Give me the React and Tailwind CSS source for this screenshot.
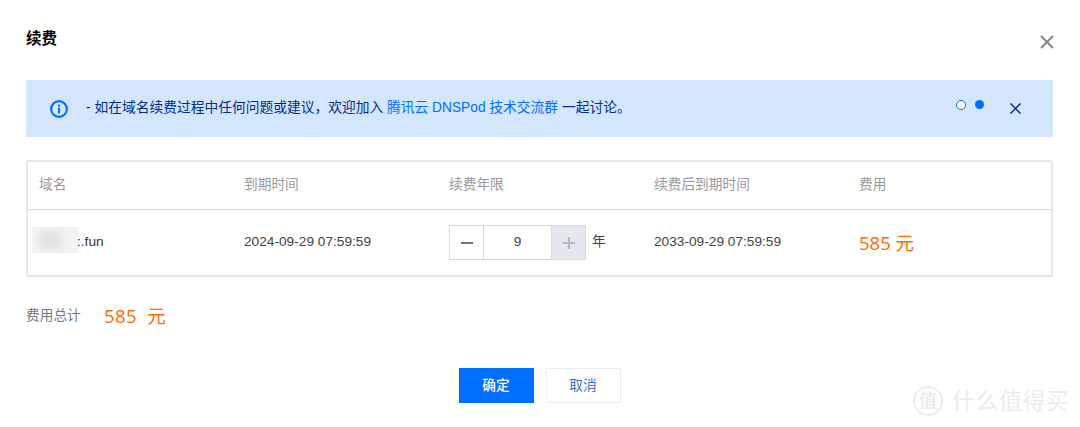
import React from "react";

const headers = ["域名", "到期时间", "续费年限", "续费后到期时间", "费用"];

const App = () => {
    return (
        <div className="relative w-[1080px] h-[427px] overflow-hidden bg-white font-['Liberation_Sans','Noto_Sans_CJK_SC',sans-serif] text-[13.7px] text-[#333]">
            <div className="px-[26px] pt-[29px]">
                {/* Title */}
                <div className="flex justify-between items-start h-[51px]">
                    <h2 className="text-[15.5px] leading-[20px] font-bold text-[#000]">续费</h2>
                    <svg className="w-[14px] h-[14px] mt-[6px]" viewBox="0 0 14 14" fill="none" stroke="#888" strokeWidth="2">
                        <path d="M1 1l12 12M13 1L1 13" />
                    </svg>
                </div>

                {/* Notice */}
                <div className="flex items-center h-[57px] w-[1027px] bg-[#d4e5fe] pl-[24px] pr-[32px] text-[#002c8c]">
                    <svg className="w-[18px] h-[18px] shrink-0" viewBox="0 0 18 18" fill="none">
                        <circle cx="9" cy="9" r="7.9" stroke="#006eff" strokeWidth="2.2" />
                        <rect x="8" y="4.6" width="2" height="2" fill="#006eff" />
                        <rect x="8" y="7.6" width="2" height="5.8" fill="#006eff" />
                    </svg>
                    <p className="ml-[18px] mb-[2px] text-[13.75px] leading-[18px] whitespace-nowrap">
                        - 如在域名续费过程中任何问题或建议，欢迎加入 <span className="text-[#006eff]">腾讯云 DNSPod 技术交流群</span> 一起讨论。
                    </p>
                    <div className="ml-auto flex items-center gap-[9px] mt-[-8px]">
                        <span className="w-[10px] h-[10px] rounded-full border border-[#006eff] bg-white"></span>
                        <span className="w-[9px] h-[9px] rounded-full bg-[#006eff]"></span>
                    </div>
                    <svg className="w-[11px] h-[11px] ml-[26px]" viewBox="0 0 11 11" fill="none" stroke="#002c8c" strokeWidth="1.5">
                        <path d="M0.5 0.5l10 10M10.5 0.5l-10 10" />
                    </svg>
                </div>

                {/* Table */}
                <div className="mt-[23px] w-[1027px] h-[117px] border-2 border-[#e4e7ee] rounded-[2px]">
                    <div className="grid grid-cols-[205px_205px_205px_205px_1fr] h-[48px] items-center border-b border-[#d5dae4] text-[#999] pl-[11px]">
                        {headers.map((h) => (
                            <div key={h}>{h}</div>
                        ))}
                    </div>
                    <div className="grid grid-cols-[205px_205px_205px_205px_1fr] h-[65px] items-center pl-[11px] text-[#444]">
                        <div className="relative pl-[38px] text-[#333]">
                            <span className="absolute left-[-7px] top-[-5px] w-[47px] h-[26px] bg-[#f3f3f3] overflow-hidden">
                                <span className="block ml-[6px] mt-[4px] w-[24px] h-[18px] rounded-full bg-[#dedede] blur-[4px]"></span>
                            </span>
                            <span className="relative">:.fun</span>
                        </div>
                        <div>2024-09-29 07:59:59</div>
                        <div className="flex items-center">
                            <div className="flex h-[35px] w-[137px] border border-[#d5dae4]">
                                <div className="w-[34px] flex items-center justify-center border-r border-[#d5dae4]">
                                    <span className="w-[12px] h-[2px] bg-[#777]"></span>
                                </div>
                                <div className="w-[67px] flex items-center justify-center text-[#444]">9</div>
                                <div className="flex-1 bg-[#e4e7ee] border-l border-[#d5dae4] flex items-center justify-center">
                                    <svg className="w-[12px] h-[12px]" viewBox="0 0 12 12" fill="#b4b8c0">
                                        <rect x="0" y="5" width="12" height="2" />
                                        <rect x="5" y="0" width="2" height="12" />
                                    </svg>
                                </div>
                            </div>
                            <span className="ml-[6px]">年</span>
                        </div>
                        <div>2033-09-29 07:59:59</div>
                        <div className="text-[#ff6a00] text-[18.5px] leading-[24px] font-['Open_Sans','Noto_Sans_CJK_SC',sans-serif]">585 元</div>
                    </div>
                </div>

                {/* Total */}
                <div className="flex items-center mt-[27px] h-[24px]">
                    <span className="text-[#777] w-[78px]">费用总计</span>
                    <span className="text-[#ff6a00] text-[18.5px] tracking-[0.4px] font-['Open_Sans','Noto_Sans_CJK_SC',sans-serif] whitespace-pre">585  元</span>
                </div>

                {/* Actions */}
                <div className="flex justify-center gap-[12px] mt-[40px] pr-[1px]">
                    <button className="w-[75px] h-[35px] pt-[1px] bg-[#006eff] text-white text-[13.7px] font-medium">确定</button>
                    <button className="w-[75px] h-[35px] pt-[1px] bg-white border border-[#e8ebf2] text-[#3d6fd1] text-[13.7px]">取消</button>
                </div>
            </div>

            {/* Watermark */}
            <div className="absolute left-[913px] top-[386px] flex items-center text-[#ececec]">
                <span className="w-[30px] h-[30px] rounded-full border-2 border-[#ececec] flex items-center justify-center text-[18px] font-bold">值</span>
                <span className="ml-[9px] text-[23px] leading-[30px] tracking-[0.5px]">什么值得买</span>
            </div>
        </div>
    );
};

export default App;
